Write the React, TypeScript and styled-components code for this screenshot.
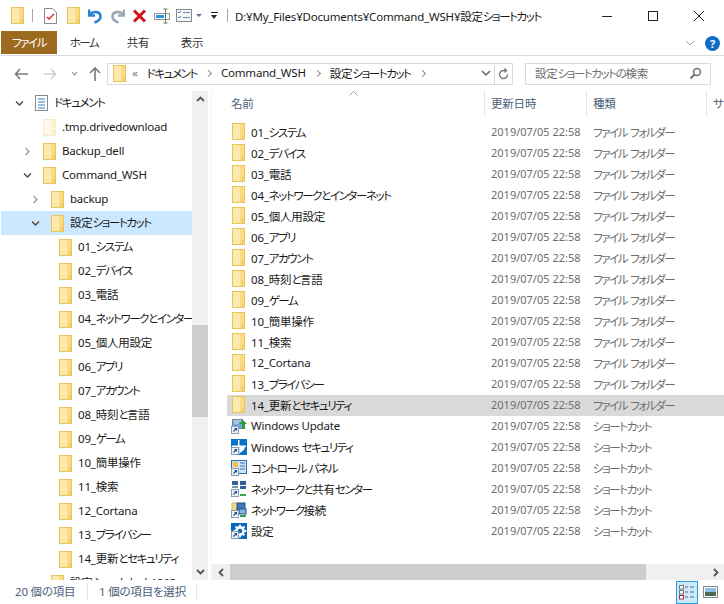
import React from 'react';
import styled, { createGlobalStyle } from 'styled-components';

const FONT = `"Noto Sans", "Noto Sans CJK JP", sans-serif`;

const folders = [
  '01_システム',
  '02_デバイス',
  '03_電話',
  '04_ネットワークとインターネット',
  '05_個人用設定',
  '06_アプリ',
  '07_アカウント',
  '08_時刻と言語',
  '09_ゲーム',
  '10_簡単操作',
  '11_検索',
  '12_Cortana',
  '13_プライバシー',
  '14_更新とセキュリティ',
];

const treeFolders = folders.map((f) =>
  f.startsWith('04_') ? '04_ネットワークとインター' : f,
);

const shortcuts = [
  { name: 'Windows Update', kind: 'update' },
  { name: 'Windows セキュリティ', kind: 'shield' },
  { name: 'コントロール パネル', kind: 'panel' },
  { name: 'ネットワークと共有センター', kind: 'share' },
  { name: 'ネットワーク接続', kind: 'net' },
  { name: '設定', kind: 'gear' },
];

// kana in the reference font is much narrower than kanji, so kana runs get their own spacing
const Jp = ({ text }: { text: string }) => (
  <>
    {text.split(/([ぁ-んァ-ヶー]+)/).map((part, i) =>
      i % 2 === 1 ? <Kana key={i}>{part}</Kana> : part,
    )}
  </>
);

const FolderIcon = ({ faded }: { faded?: boolean }) => (
  <svg width="13" height="17" viewBox="0 0 13 17">
    <rect x="0.5" y="0.5" width="12" height="16" fill={faded ? '#fdf3d3' : '#fbdc85'} stroke={faded ? '#f7ecc6' : '#eac559'} />
    <path d="M1 1h7v15H1z" fill={faded ? '#fef9e8' : '#fde9ad'} />
    <path d="M10.5 16.5v-4h2" fill="none" stroke={faded ? '#f7ecc6' : '#eac559'} />
  </svg>
);

const Arrow = () => (
  <g>
    <rect x="0.5" y="8.5" width="7" height="7" fill="#eef2f8" stroke="#8b9bb0" />
    <path d="M2.5 13.5 5.5 10.5M3.5 10.5h2v2" fill="none" stroke="#1d4f96" strokeWidth="1.1" />
  </g>
);

const ShortcutIcon = ({ kind }: { kind: string }) => (
  <svg width="16" height="16" viewBox="0 0 16 16">
    {kind === 'update' && (
      <>
        <rect x="1.5" y="1.5" width="10" height="9" fill="#6fa5dc" stroke="#7a8796" />
        <path d="M3 3h7M3 5h5" stroke="#dfeaf6" />
        <path d="M12 2l4 4h-2v5h-3V6H8z" fill="#2f9e3f" />
      </>
    )}
    {kind === 'shield' && (
      <>
        <path d="M0 0h16v16H0z" fill="#0a74c9" />
        <path d="M8.500 1H15v6H8.500zM1 1h6v6H1z" fill="#0a74c9" />
        <path d="M7 1h1.500v14H7zM1 6.500h14V8H1z" fill="#fff" />
        <path d="M8.500 8H14c0 2-2.500 4.500-5.500 6z" fill="#ffffff" />
      </>
    )}
    {kind === 'panel' && (
      <>
        <rect x="0.5" y="0.5" width="15" height="13" fill="#cfe3f6" stroke="#2a72b8" />
        <rect x="2" y="2" width="5" height="5" fill="#f0c04a" />
        <path d="M9 3h5M9 6h5M9 9h5" stroke="#2a72b8" />
      </>
    )}
    {kind === 'share' && (
      <>
        <rect x="1" y="0" width="6" height="4" fill="#31609c" />
        <rect x="9" y="0" width="6" height="4" fill="#31609c" />
        <rect x="1" y="5" width="6" height="2" fill="#7d93ad" />
        <rect x="9" y="5" width="6" height="3" fill="#31609c" />
        <rect x="9" y="13" width="6" height="2" fill="#37a34a" />
      </>
    )}
    {kind === 'net' && (
      <>
        <path d="M1 1h5l2 2v6H1z" fill="#f3d886" stroke="#c9b06a" />
        <rect x="6" y="1" width="8" height="7" fill="#3f78bd" stroke="#24508a" />
        <rect x="8" y="7" width="7" height="5" fill="#8db4de" stroke="#24508a" />
        <rect x="9" y="13" width="6" height="2" fill="#37a34a" />
      </>
    )}
    {kind === 'gear' && (
      <>
        <rect width="16" height="16" fill="#0a66c0" />
        <circle cx="9" cy="8" r="3.6" fill="none" stroke="#fff" strokeWidth="2.6" />
        <path d="M9 1.5v2M9 12.5v2M2.5 8h2M13.5 8h2M4.5 3.5l1.4 1.4M12 11l1.4 1.4M13.5 3.5 12 5M6 11l-1.5 1.5" stroke="#fff" strokeWidth="1.8" />
      </>
    )}
    <Arrow />
  </svg>
);

const Chevron = ({ open }: { open?: boolean }) => (
  <svg width="9" height="9" viewBox="0 0 9 9">
    {open ? (
      <path d="M1 2.5 4.5 6 8 2.5" fill="none" stroke="#5b4a46" strokeWidth="1.5" />
    ) : (
      <path d="M2.5 1 6 4.5 2.5 8" fill="none" stroke="#a6a6a6" strokeWidth="1.5" />
    )}
  </svg>
);

const ScrollArrow = ({ dir }: { dir: 'up' | 'down' | 'left' | 'right' }) => {
  const d = {
    up: 'M1 6 4.5 2.5 8 6',
    down: 'M1 3 4.5 6.5 8 3',
    left: 'M6 1 2.5 4.5 6 8',
    right: 'M3 1 6.5 4.5 3 8',
  }[dir];
  return (
    <svg width="9" height="9" viewBox="0 0 9 9">
      <path d={d} fill="none" stroke="#555" strokeWidth="1.8" />
    </svg>
  );
};

const App = () => (
  <Root>
    <GlobalStyle />
    <TitleBar>
      <QuickTools>
        <FolderIcon />
        <Slot $left={8}><ToolSep /></Slot>
        <Slot $left={11}>
          <svg width="13" height="16" viewBox="0 0 13 16">
            <path d="M0.5 0.5h8l4 4v11H0.5z" fill="#fff" stroke="#8a8a8a" />
            <path d="M3 9l2 2 5-5" fill="none" stroke="#d22" strokeWidth="1.4" />
          </svg>
        </Slot>
        <Slot $left={10}><FolderIcon /></Slot>
        <Slot $left={8}>
          <svg width="14" height="16" viewBox="0 0 14 16">
            <path d="M1 1.5v6h6M2 6.5C4.500 3 12.500 3 12.500 8.500c0 3-3 5-6 6" fill="none" stroke="#2a84d2" strokeWidth="2.6" />
          </svg>
        </Slot>
        <Slot $left={9}>
          <svg width="14" height="16" viewBox="0 0 14 16">
            <path d="M13 1.500v6H7M12 6.500C9.500 3 1.500 3 1.500 8.500c0 3 3 5 6 6" fill="none" stroke="#9aa6b2" strokeWidth="2.6" />
          </svg>
        </Slot>
        <Slot $left={7}>
          <svg width="15" height="14" viewBox="0 0 15 14">
            <path d="M2 1.500 13 12.500M13 1.500 2 12.500" stroke="#d3141a" strokeWidth="3" />
          </svg>
        </Slot>
        <Slot $left={7}>
          <svg width="16" height="16" viewBox="0 0 16 16">
            <rect x="0.500" y="5.500" width="15" height="6" fill="#fff" stroke="#8a99a8" />
            <rect x="2" y="7" width="8" height="3" fill="#2f93e0" />
            <path d="M11.500 1v14M9.500 1h4M9.500 15h4" stroke="#6b7a55" />
          </svg>
        </Slot>
        <Slot $left={6}>
          <svg width="16" height="13" viewBox="0 0 16 13">
            <rect x="0.500" y="0.500" width="15" height="12" fill="#f4f7fb" stroke="#8a8a8a" />
            <path d="M2 3l1 1 2-2M2 8l1 1 2-2" fill="none" stroke="#2a84d2" />
            <path d="M7 3.500h7M7 8.500h7" stroke="#8a8a8a" />
          </svg>
        </Slot>
        <Slot $left={4}><SmallCaret /></Slot>
        <Slot $left={9}><MenuCaret /></Slot>
        <Slot $left={9}><ToolSep /></Slot>
      </QuickTools>
      <PathTitle><Jp text="D:¥My_Files¥Documents¥Command_WSH¥設定ショートカット" /></PathTitle>
      <WindowButtons>
        <svg width="12" height="12" viewBox="0 0 12 12"><path d="M1 6.500h10" stroke="#222" /></svg>
        <svg width="12" height="12" viewBox="0 0 12 12"><rect x="1.500" y="1.500" width="9" height="9" fill="none" stroke="#222" /></svg>
        <svg width="12" height="12" viewBox="0 0 12 12"><path d="M1 1l10 10M11 1 1 11" stroke="#222" /></svg>
      </WindowButtons>
    </TitleBar>

    <RibbonTabs>
      <FileTab><Jp text="ファイル" /></FileTab>
      <RibbonTab><Jp text="ホーム" /></RibbonTab>
      <RibbonTab>共有</RibbonTab>
      <RibbonTab>表示</RibbonTab>
      <RibbonEnd>
        <svg width="10" height="6" viewBox="0 0 10 6"><path d="M1 1l4 4 4-4" fill="none" stroke="#a0a0a0" /></svg>
        <HelpBadge>?</HelpBadge>
      </RibbonEnd>
    </RibbonTabs>

    <AddressRow>
      <NavArrows>
        <svg width="14" height="12" viewBox="0 0 14 12"><path d="M6 1 1.500 6 6 11M2 6h12" fill="none" stroke="#7a7a7a" strokeWidth="1.600" /></svg>
        <Slot $left={16}><svg width="13" height="12" viewBox="0 0 13 12"><path d="M7 1l4.500 5L7 11M11 6H0" fill="none" stroke="#d0d0d0" strokeWidth="1.600" /></svg></Slot>
        <Slot $left={14}><svg width="7" height="6" viewBox="0 0 7 6"><path d="M1 1l2.500 3L6 1" fill="none" stroke="#a0a0a0" strokeWidth="1.200" /></svg></Slot>
        <Slot $left={11}><svg width="12" height="14" viewBox="0 0 12 14"><path d="M1 6l5-5 5 5M6 2v12" fill="none" stroke="#7a7a7a" strokeWidth="1.600" /></svg></Slot>
      </NavArrows>
      <AddressBox>
        <FolderIcon />
        <Crumb $muted $left={6}>«</Crumb>
        <Crumb $left={9}><Jp text="ドキュメント" /></Crumb>
        <CrumbSep />
        <Crumb>Command_WSH</Crumb>
        <CrumbSep />
        <Crumb><Jp text="設定ショートカット" /></Crumb>
        <CrumbSep />
        <AddressEnd>
          <svg width="10" height="7" viewBox="0 0 10 7"><path d="M1 1l4 4 4-4" fill="none" stroke="#666" strokeWidth="1.500" /></svg>
          <RefreshCell>
            <svg width="11" height="12" viewBox="0 0 11 12"><path d="M9.500 6.500A4 4 0 1 1 6 2.500H8M6.500 0.500 8.500 2.500 6.500 4.500" fill="none" stroke="#7a7a7a" strokeWidth="1.400" /></svg>
          </RefreshCell>
        </AddressEnd>
      </AddressBox>
      <SearchBox>
        <SearchText><Jp text="設定ショートカットの検索" /></SearchText>
        <svg width="13" height="13" viewBox="0 0 13 13"><circle cx="8" cy="5" r="3.400" fill="none" stroke="#6e6e6e" strokeWidth="1.500" /><path d="M5.500 7.500 1.500 11.500" stroke="#6e6e6e" strokeWidth="2" /></svg>
      </SearchBox>
    </AddressRow>

    <Panes>
      <NavPane>
        <TreeList>
          <TreeRow $depth={0}>
            <ChevronSlot><Chevron open /></ChevronSlot>
            <svg width="13" height="16" viewBox="0 0 13 16">
              <rect x="0.500" y="0.500" width="12" height="15" fill="#fff" stroke="#8a8a8a" />
              <path d="M3 4h7M3 7h7M3 10h7M3 13h7" stroke="#3f7fc2" />
            </svg>
            <TreeLabel><Jp text="ドキュメント" /></TreeLabel>
          </TreeRow>
          <TreeRow $depth={1}>
            <ChevronSlot />
            <FolderIcon faded />
            <TreeLabel>.tmp.drivedownload</TreeLabel>
          </TreeRow>
          <TreeRow $depth={1}>
            <ChevronSlot><Chevron /></ChevronSlot>
            <FolderIcon />
            <TreeLabel>Backup_dell</TreeLabel>
          </TreeRow>
          <TreeRow $depth={1}>
            <ChevronSlot><Chevron open /></ChevronSlot>
            <FolderIcon />
            <TreeLabel>Command_WSH</TreeLabel>
          </TreeRow>
          <TreeRow $depth={2}>
            <ChevronSlot><Chevron /></ChevronSlot>
            <FolderIcon />
            <TreeLabel>backup</TreeLabel>
          </TreeRow>
          <TreeRow $depth={2} $selected>
            <ChevronSlot><Chevron open /></ChevronSlot>
            <FolderIcon />
            <TreeLabel><Jp text="設定ショートカット" /></TreeLabel>
          </TreeRow>
          {treeFolders.map((name) => (
            <TreeRow $depth={3} key={name}>
              <ChevronSlot />
              <FolderIcon />
              <TreeLabel><Jp text={name} /></TreeLabel>
            </TreeRow>
          ))}
          <TreeRow $depth={2}>
            <ChevronSlot><Chevron /></ChevronSlot>
            <FolderIcon />
            <TreeLabel><Jp text="設定ショートカット1903" /></TreeLabel>
          </TreeRow>
        </TreeList>
        <VScroll>
          <ScrollButton><ScrollArrow dir="up" /></ScrollButton>
          <VTrack><VThumb /></VTrack>
          <ScrollButton><ScrollArrow dir="down" /></ScrollButton>
        </VScroll>
      </NavPane>

      <ListPane>
        <SortMark>
          <svg width="9" height="5" viewBox="0 0 9 5"><path d="M0.500 4.500 4.500 0.500 8.500 4.500" fill="none" stroke="#a0a0a0" /></svg>
        </SortMark>
        <Header>
          <HeaderCell $width={260}>名前</HeaderCell>
          <HeaderCell $width={102}>更新日時</HeaderCell>
          <HeaderCell $width={120}>種類</HeaderCell>
          <HeaderCell $width={40}>サ</HeaderCell>
        </Header>
        <Rows>
          {folders.map((name) => (
            <FileRow key={name} $selected={name.startsWith('14_')}>
              <NameCell>
                <FolderIcon />
                <FolderName><Jp text={name} /></FolderName>
              </NameCell>
              <DateCell>2019/07/05 22:58</DateCell>
              <TypeCell><Jp text="ファイル フォルダー" /></TypeCell>
            </FileRow>
          ))}
          {shortcuts.map((s) => (
            <FileRow key={s.name}>
              <NameCell>
                <ShortcutSlot><ShortcutIcon kind={s.kind} /></ShortcutSlot>
                <ShortcutName><Jp text={s.name} /></ShortcutName>
              </NameCell>
              <DateCell>2019/07/05 22:58</DateCell>
              <TypeCell><Jp text="ショートカット" /></TypeCell>
            </FileRow>
          ))}
        </Rows>
        <HScroll>
          <HScrollButton><ScrollArrow dir="left" /></HScrollButton>
          <HThumb />
          <HScrollButton><ScrollArrow dir="right" /></HScrollButton>
        </HScroll>
      </ListPane>
    </Panes>

    <StatusBar>
      <StatusText $width={72}>20 個の項目</StatusText>
      <StatusText $width={97}>1 個の項目を選択</StatusText>
      <ViewSwitch>
        <ViewButton $active>
          <svg width="16" height="16" viewBox="0 0 16 16">
            <rect x="0.500" y="1.500" width="4" height="3.500" fill="#fff" stroke="#777" />
            <rect x="0.500" y="6.500" width="4" height="3.500" fill="#fff" stroke="#777" />
            <rect x="0.500" y="11.500" width="4" height="3.500" fill="#fff" stroke="#a33" />
            <path d="M6 3h3M11 3h4M6 8h3M11 8h4M6 13h3M11 13h4" stroke="#666" />
          </svg>
        </ViewButton>
        <ViewButton>
          <svg width="15" height="12" viewBox="0 0 15 12">
            <rect x="0.500" y="0.500" width="14" height="11" fill="#fff" stroke="#888" />
            <rect x="2" y="2" width="11" height="4" fill="#8ec0e6" />
            <rect x="2" y="6" width="11" height="4" fill="#4d6a55" />
          </svg>
        </ViewButton>
      </ViewSwitch>
    </StatusBar>
  </Root>
);

const GlobalStyle = createGlobalStyle`
  html, body {
    margin: 0;
    padding: 0;
    background: #ffffff;
  }
  svg {
    flex-shrink: 0;
    display: block;
  }
`;

const Root = styled.div`
  width: 724px;
  height: 604px;
  overflow: hidden;
  display: flex;
  flex-direction: column;
  font-family: ${FONT};
  font-size: 11.5px;
  font-feature-settings: "palt";
  letter-spacing: -0.2px;
  color: #1a1a1a;
  background: #ffffff;
`;

const Kana = styled.span`
  letter-spacing: -1.4px;
`;

const TitleBar = styled.div`
  height: 31px;
  display: flex;
  align-items: center;
  padding-left: 11px;
`;

const QuickTools = styled.div`
  display: flex;
  align-items: center;
`;

const Slot = styled.span<{ $left: number }>`
  margin-left: ${(p) => p.$left}px;
  display: flex;
  align-items: center;
`;

const ToolSep = styled.span`
  width: 1px;
  height: 13px;
  background: #a8a8a8;
`;

const SmallCaret = styled.span`
  width: 0;
  height: 0;
  border-left: 3px solid transparent;
  border-right: 3px solid transparent;
  border-top: 3px solid #6d6d9c;
`;

const MenuCaret = styled.span`
  position: relative;
  width: 7px;
  height: 6px;
  border-top: 1px solid #222;

  &::after {
    content: '';
    position: absolute;
    left: 0;
    top: 2px;
    border-left: 3.5px solid transparent;
    border-right: 3.5px solid transparent;
    border-top: 4px solid #222;
  }
`;

const PathTitle = styled.div`
  margin-left: 7px;
  flex: 1;
  white-space: nowrap;
`;

const WindowButtons = styled.div`
  display: flex;
  align-items: center;
  gap: 34px;
  padding-right: 19px;
`;

const RibbonTabs = styled.div`
  height: 24px;
  margin-left: 1px;
  display: flex;
  align-items: stretch;
  border-bottom: 1px solid #dadada;
`;

const FileTab = styled.div`
  width: 56px;
  height: 23px;
  padding-bottom: 2px;
  box-sizing: border-box;
  display: flex;
  align-items: center;
  justify-content: center;
  background: #9c6a1f;
  color: #ffffff;
`;

const RibbonTab = styled.div`
  width: 54px;
  padding-bottom: 2px;
  display: flex;
  align-items: center;
  justify-content: center;
  color: #333;
`;

const RibbonEnd = styled.div`
  margin-left: auto;
  display: flex;
  align-items: center;
  gap: 10px;
  padding-right: 4px;
`;

const HelpBadge = styled.span`
  width: 15px;
  height: 15px;
  border-radius: 50%;
  background: #0f6cc4;
  color: #ffffff;
  font-size: 11px;
  font-weight: 700;
  line-height: 15px;
  text-align: center;
`;

const AddressRow = styled.div`
  height: 35px;
  display: flex;
  align-items: center;
  padding-left: 14px;
`;

const NavArrows = styled.div`
  width: 93px;
  display: flex;
  align-items: center;
`;

const AddressBox = styled.div`
  width: 406px;
  height: 22px;
  box-sizing: border-box;
  display: flex;
  align-items: center;
  padding-left: 5px;
  border: 1px solid #d9d9d9;
  white-space: nowrap;
`;

const Crumb = styled.span<{ $muted?: boolean; $left?: number }>`
  margin-left: ${(p) => p.$left ?? 0}px;
  padding-bottom: 2px;
  color: ${(p) => (p.$muted ? '#777' : '#1a1a1a')};
`;

const CrumbSep = styled.span`
  width: 4px;
  height: 4px;
  margin: 0 10px 0 9px;
  border-top: 1.5px solid #8a8a8a;
  border-right: 1.5px solid #8a8a8a;
  transform: rotate(45deg);
`;

const AddressEnd = styled.div`
  margin-left: auto;
  height: 100%;
  display: flex;
  align-items: center;
  gap: 3px;
`;

const RefreshCell = styled.div`
  width: 17px;
  height: 100%;
  display: flex;
  align-items: center;
  justify-content: center;
  border-left: 1px solid #d9d9d9;
`;

const SearchBox = styled.div`
  width: 186px;
  height: 22px;
  margin-left: 12px;
  box-sizing: border-box;
  display: flex;
  align-items: center;
  justify-content: space-between;
  padding: 0 8px 0 9px;
  border: 1px solid #d9d9d9;
  color: #6d6d6d;
`;

const SearchText = styled.span`
  padding-bottom: 2px;
`;

const Panes = styled.div`
  height: 489px;
  flex-shrink: 0;
  display: flex;
`;

const NavPane = styled.div`
  width: 208px;
  flex-shrink: 0;
  display: flex;
  overflow: hidden;
`;

const TreeList = styled.div`
  width: 191px;
  margin-left: 1px;
  overflow: hidden;
`;

const TreeRow = styled.div<{ $depth: number; $selected?: boolean }>`
  height: 24px;
  display: flex;
  align-items: center;
  padding-left: ${(p) => 14 + p.$depth * 8}px;
  background: ${(p) => (p.$selected ? '#cce8ff' : 'transparent')};
`;

const ChevronSlot = styled.span`
  width: 20px;
  flex-shrink: 0;
  display: flex;
  align-items: center;
`;

const TreeLabel = styled.span`
  margin-left: 6px;
  padding-bottom: 2px;
  white-space: nowrap;
`;

const VScroll = styled.div`
  width: 16px;
  flex-shrink: 0;
  display: flex;
  flex-direction: column;
  background: #f0f0f0;
`;

const ScrollButton = styled.div`
  height: 17px;
  display: flex;
  align-items: center;
  justify-content: center;
`;

const VTrack = styled.div`
  flex: 1;
  padding-top: 217px;
`;

const VThumb = styled.div`
  height: 92px;
  background: #cdcdcd;
`;

const ListPane = styled.div`
  position: relative;
  flex: 1;
  min-width: 0;
  display: flex;
  flex-direction: column;
  margin-left: 3px;
  border-left: 1px solid #f2f2f2;
  overflow: hidden;
`;

const SortMark = styled.div`
  position: absolute;
  top: 0;
  left: 137px;
`;

const Header = styled.div`
  height: 25px;
  flex-shrink: 0;
  display: flex;
  padding-left: 13px;
`;

const HeaderCell = styled.div<{ $width: number }>`
  width: ${(p) => p.$width}px;
  flex-shrink: 0;
  box-sizing: border-box;
  display: flex;
  align-items: center;
  padding: 0 0 2px 6px;
  color: #4c607a;
  border-right: 1px solid #e5e5e5;
`;

const Rows = styled.div`
  flex: 1;
  padding-top: 6px;
`;

const FileRow = styled.div<{ $selected?: boolean }>`
  height: 21px;
  box-sizing: border-box;
  margin-left: 15px;
  padding-bottom: 2px;
  display: flex;
  align-items: center;
  background: ${(p) => (p.$selected ? '#d9d9d9' : 'transparent')};
`;

const NameCell = styled.div`
  width: 264px;
  flex-shrink: 0;
  display: flex;
  align-items: center;
  padding-left: 5px;
  box-sizing: border-box;
`;

const FolderName = styled.span`
  margin-left: 6px;
  white-space: nowrap;
`;

const ShortcutSlot = styled.span`
  margin-left: -1px;
`;

const ShortcutName = styled.span`
  margin-left: 4px;
  white-space: nowrap;
`;

const DateCell = styled.div`
  width: 102px;
  flex-shrink: 0;
  font-size: 11px;
  letter-spacing: 0;
  color: #6d6d6d;
`;

const TypeCell = styled.div`
  color: #6d6d6d;
  white-space: nowrap;
`;

const HScroll = styled.div`
  height: 16px;
  flex-shrink: 0;
  display: flex;
  background: #f0f0f0;
`;

const HScrollButton = styled.div`
  width: 18px;
  display: flex;
  align-items: center;
  justify-content: center;
`;

const HThumb = styled.div`
  width: 416px;
  margin-right: auto;
  background: #cdcdcd;
`;

const StatusBar = styled.div`
  flex: 1;
  display: flex;
  align-items: center;
  padding-left: 15px;
`;

const StatusText = styled.span<{ $width: number }>`
  width: ${(p) => p.$width}px;
  margin-right: 11px;
  padding-bottom: 2px;
  border-right: 1px solid #e5e5e5;
  color: #4c607a;
  white-space: nowrap;
`;

const ViewSwitch = styled.div`
  margin-left: auto;
  display: flex;
  align-items: center;
  gap: 1px;
  padding-right: 3px;
`;

const ViewButton = styled.div<{ $active?: boolean }>`
  width: 22px;
  height: 23px;
  box-sizing: border-box;
  display: flex;
  align-items: center;
  justify-content: center;
  background: ${(p) => (p.$active ? '#cce8ff' : 'transparent')};
  border: ${(p) => (p.$active ? '1px solid #26a0da' : 'none')};
`;

export default App;
